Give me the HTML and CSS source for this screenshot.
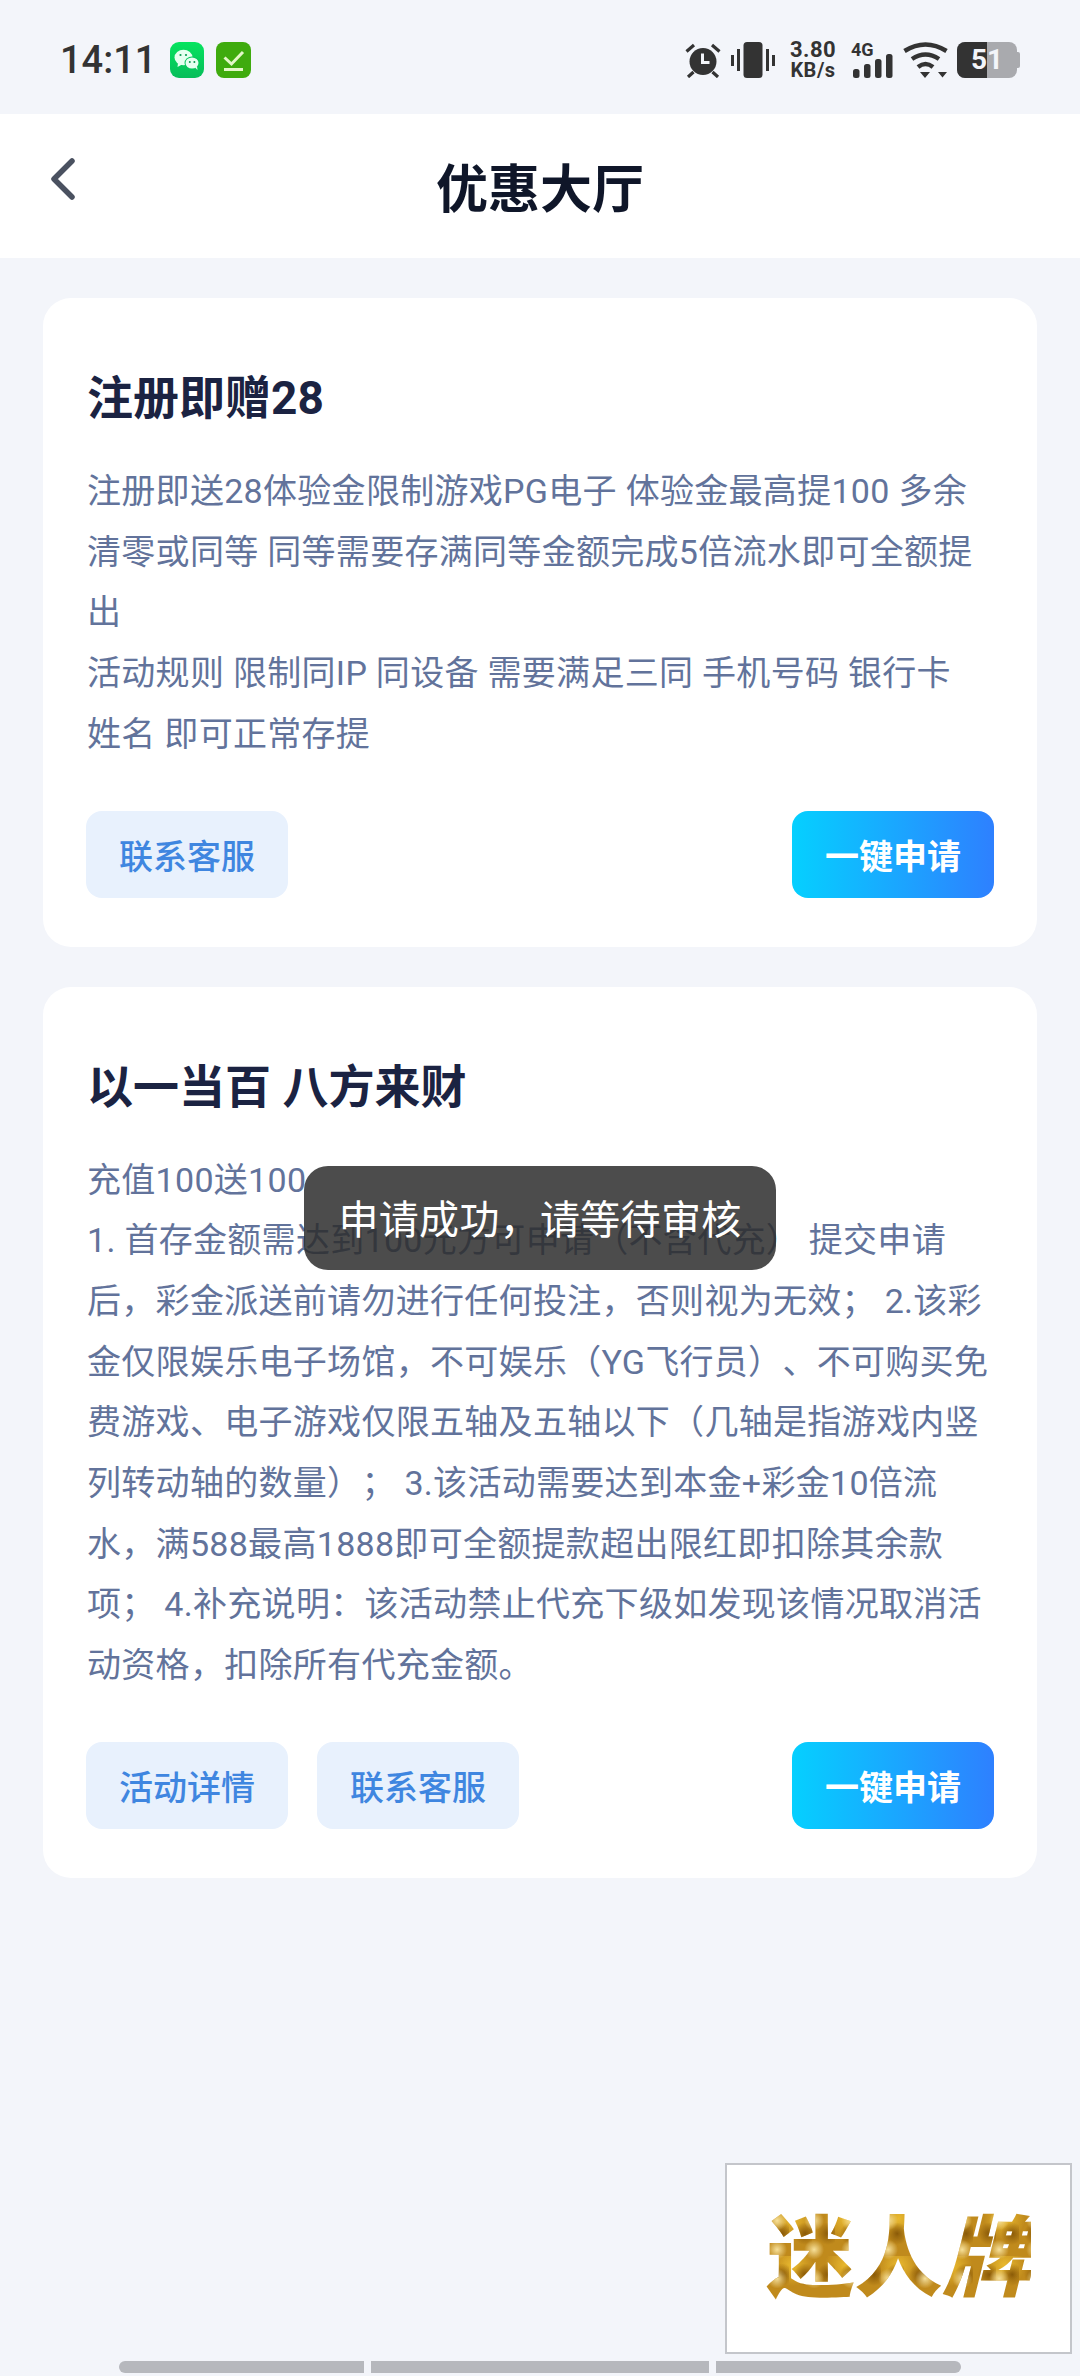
FILE: index.html
```html
<!DOCTYPE html>
<html lang="zh">
<head>
    <meta charset="utf-8">
    <title>优惠大厅</title>
    <link rel="stylesheet" href="styles.css">
</head>
<body>
    <div class="status-bar">
        <div class="status-left">
            <span class="time">14:11</span>
            <svg class="app-icon" viewBox="0 0 34 36">
                <defs>
                    <linearGradient id="wxGreen" x1="0" y1="0" x2="0" y2="1">
                        <stop offset="0" stop-color="#06e45f"/>
                        <stop offset="1" stop-color="#07bd5a"/>
                    </linearGradient>
                </defs>
                <rect width="34" height="36" rx="9" fill="url(#wxGreen)"/>
                <ellipse cx="13.5" cy="15.5" rx="9" ry="7.8" fill="#e6fff0"/>
                <path d="M8 21l-.5 4 4.500-2.500z" fill="#e6fff0"/>
                <ellipse cx="22" cy="21" rx="7.500" ry="6.500" fill="#06c85c"/>
                <ellipse cx="22" cy="21" rx="6.500" ry="5.600" fill="#e6fff0"/>
                <path d="M25 25.500l2.500 2.500-.5-4z" fill="#e6fff0"/>
                <circle cx="10.500" cy="13" r="1.100" fill="#0a9a50"/>
                <circle cx="16" cy="13" r="1.100" fill="#0a9a50"/>
                <circle cx="19.800" cy="20" r="1" fill="#0a9a50"/>
                <circle cx="24.400" cy="20" r="1" fill="#0a9a50"/>
            </svg>
            <svg class="app-icon app-icon-wide" viewBox="0 0 35 36">
                <rect width="35" height="36" rx="8" fill="#3fab0e"/>
                <path d="M8.500 15.500l7 6.500 11.500-12" fill="none" stroke="#e4f7c8" stroke-width="3"/>
                <path d="M8 27.500h19" fill="none" stroke="#e4f7c8" stroke-width="3"/>
            </svg>
        </div>
        <div class="status-right">
            <svg class="sys-icon" width="36" height="36" viewBox="0 0 36 36">
                <circle cx="18" cy="19.500" r="13.500" fill="#333"/>
                <path d="M17.500 11.500v9h7" fill="none" stroke="#f3f5fa" stroke-width="3"/>
                <path d="M1.500 9.500L9 3M34.500 9.500L27 3M3 35l5.500-5M33 35l-5.500-5" fill="none" stroke="#333" stroke-width="3.200"/>
            </svg>
            <svg class="sys-icon" width="44" height="36" viewBox="0 0 44 36">
                <rect x="12.500" y="0" width="19" height="36" rx="3.500" fill="#333"/>
                <path d="M1.500 13v11M7.500 7v22M36.500 7v22M42.500 13v11" fill="none" stroke="#333" stroke-width="3"/>
            </svg>
            <div class="net-speed"><span>3.80</span><span class="net-unit">KB/s</span></div>
            <div class="signal">
                <span class="signal-label">4G</span>
                <svg width="40" height="24" viewBox="0 0 40 24">
                    <rect x="0" y="15" width="6.500" height="9" rx="2.500" fill="#333"/>
                    <rect x="11" y="10" width="6.500" height="14" rx="2.500" fill="#333"/>
                    <rect x="22" y="5" width="6.500" height="19" rx="2.500" fill="#333"/>
                    <rect x="33" y="0" width="6.500" height="24" rx="2.500" fill="#333"/>
                </svg>
            </div>
            <svg class="sys-icon" width="45" height="36" viewBox="0 0 45 36">
                <path d="M1.500 9Q22.500 -4 43.500 9" fill="none" stroke="#333" stroke-width="4.500"/>
                <path d="M9 17Q22.500 8 36 17" fill="none" stroke="#333" stroke-width="4.500"/>
                <path d="M15 25Q22.500 19 30 25" fill="none" stroke="#333" stroke-width="4.500"/>
                <path d="M17 30h10l-5 6zM35 30h9l-4.500 5.500z" fill="#333"/>
            </svg>
            <div class="battery">
                <div class="battery-body"><div class="battery-fill"></div><span class="battery-num">51</span></div>
                <div class="battery-cap"></div>
            </div>
        </div>
    </div>

    <div class="top-bar">
        <svg class="back" width="24" height="42" viewBox="0 0 24 42">
            <path d="M21 3L3 21l18 18" fill="none" stroke="#4a5160" stroke-width="5.500" stroke-linecap="round" stroke-linejoin="round"/>
        </svg>
        <h1>优惠大厅</h1>
    </div>

    <div class="content">
        <div class="card">
            <h2>注册即赠28</h2>
            <p>注册即送28体验金限制游戏PG电子 体验金最高提100 多余清零或同等 同等需要存满同等金额完成5倍流水即可全额提出<br>活动规则 限制同IP 同设备 需要满足三同 手机号码 银行卡 姓名 即可正常存提</p>
            <div class="actions">
                <a class="btn btn-light">联系客服</a>
                <a class="btn btn-apply">一键申请</a>
            </div>
        </div>
        <div class="card">
            <h2>以一当百 八方来财</h2>
            <p>充值100送100<br>1. 首存金额需达到100元方可申请（不含代充） 提交申请后，彩金派送前请勿进行任何投注，否则视为无效； 2.该彩金仅限娱乐电子场馆，不可娱乐（YG飞行员）、不可购买免费游戏、电子游戏仅限五轴及五轴以下（几轴是指游戏内竖列转动轴的数量）； 3.该活动需要达到本金+彩金10倍流水，满588最高1888即可全额提款超出限红即扣除其余款项； 4.补充说明：该活动禁止代充下级如发现该情况取消活动资格，扣除所有代充金额。</p>
            <div class="actions">
                <a class="btn btn-light">活动详情</a>
                <a class="btn btn-light">联系客服</a>
                <a class="btn btn-apply">一键申请</a>
            </div>
        </div>
    </div>

    <!-- 提示 -->
    <div class="toast">申请成功，请等待审核</div>

    <!-- 悬浮广告 -->
    <div class="float-ad"><span class="ad-text">迷人<i>牌</i></span></div>

    <div class="gesture">
        <span class="gesture-a"></span>
        <span class="gesture-b"></span>
        <span class="gesture-c"></span>
    </div>
</body>
</html>
```

FILE: styles.css
```css
* {
    box-sizing: border-box;
}

html, body {
    margin: 0;
    height: 2376px;
    overflow: hidden;
}

body {
    position: relative;
    background-color: #f3f5fa;
    font-family: "Roboto", "Noto Sans CJK SC", sans-serif;
    color: #333;
}

.status-bar {
    height: 114px;
    padding: 42px 60px 0 60px;
    display: flex;
    justify-content: space-between;
    align-items: flex-start;
}

.status-left {
    display: flex;
    align-items: center;
    gap: 12px;
    height: 36px;
}

.time {
    font-size: 38px;
    font-weight: 500;
    line-height: 36px;
    width: 98px;
}

.app-icon {
    width: 34px;
    height: 36px;
}

.app-icon-wide {
    width: 35px;
}

.status-right {
    display: flex;
    align-items: flex-start;
    gap: 10px;
    height: 36px;
}

.sys-icon {
    display: block;
}

.net-speed {
    width: 46px;
    margin: -2px 5px 0;
    display: flex;
    flex-direction: column;
    align-items: center;
    font-size: 22px;
    font-weight: 700;
    line-height: 20px;
    letter-spacing: 0.5px;
}

.net-unit {
    font-size: 20px;
}

.signal {
    width: 42px;
    height: 36px;
    position: relative;
}

.signal-label {
    display: block;
    font-size: 18px;
    font-weight: 700;
    line-height: 16px;
}

.signal svg {
    position: absolute;
    left: 2px;
    bottom: 0;
}

.battery {
    display: flex;
    align-items: center;
    margin-left: -1px;
}

.battery-body {
    position: relative;
    width: 60px;
    height: 36px;
    border-radius: 8px;
    background-color: #a9aaae;
    overflow: hidden;
}

.battery-fill {
    width: 30px;
    height: 36px;
    background-color: #333;
}

.battery-num {
    position: absolute;
    left: 0;
    right: 0;
    top: 0;
    text-align: center;
    font-size: 28px;
    font-weight: 700;
    line-height: 36px;
    color: #f3f5fa;
}

.battery-cap {
    width: 3px;
    height: 16px;
    border-radius: 0 2px 2px 0;
    background-color: #a9aaae;
}

.top-bar {
    position: relative;
    height: 144px;
    background-color: #fff;
    display: flex;
    align-items: center;
    justify-content: center;
}

.back {
    position: absolute;
    left: 51px;
    top: 44px;
}

h1 {
    margin: 0;
    font-size: 52px;
    font-weight: 700;
    color: #0f1629;
    padding-bottom: 2px;
}

.content {
    padding: 40px 43px 0;
    display: flex;
    flex-direction: column;
    gap: 40px;
}

.card {
    background-color: #fff;
    border-radius: 28px;
    padding: 68px 43px 49px 44px;
}

h2 {
    margin: 0 0 31px;
    font-size: 46px;
    line-height: 64px;
    font-weight: 700;
    color: #1b2342;
}

.card p {
    margin: 0;
    font-size: 34px;
    letter-spacing: 0.3px;
    line-height: 60.7px;
    color: #62739b;
    width: 906px;
    text-spacing-trim: space-all;
}

.actions {
    margin: 46px 0 0 -1px;
    display: flex;
    gap: 29px;
}

.btn {
    width: 202px;
    height: 87px;
    border-radius: 16px;
    display: flex;
    align-items: center;
    justify-content: center;
    font-size: 34px;
    font-weight: 500;
}

.btn-light {
    background-color: #e8f1fd;
    color: #3f86e0;
}

.btn-apply {
    margin-left: auto;
    background: linear-gradient(90deg, #05d0ff, #2e80ff);
    color: #fff;
    font-weight: 700;
}

.toast {
    position: absolute;
    left: 304px;
    top: 1166px;
    width: 472px;
    height: 104px;
    padding-bottom: 3px;
    border-radius: 24px;
    background-color: rgba(45, 45, 45, 0.85);
    color: #fff;
    font-size: 40px;
    letter-spacing: 0.3px;
    display: flex;
    align-items: center;
    justify-content: center;
}

.float-ad {
    position: absolute;
    left: 725px;
    top: 2163px;
    width: 347px;
    height: 191px;
    background-color: #fff;
    border: 2px solid #c4c6cb;
    display: flex;
    align-items: center;
    justify-content: center;
}

.ad-text {
    font-size: 88px;
    font-weight: 900;
    line-height: 100px;
    background-color: #c08a1c;
    background-image:
        radial-gradient(circle at 30% 40%, #f6e09a 0, rgba(246, 224, 154, 0) 32%),
        radial-gradient(circle at 70% 60%, #8a5a08 0, rgba(138, 90, 8, 0) 38%),
        radial-gradient(circle at 50% 20%, #e9b92f 0, rgba(233, 185, 47, 0) 45%);
    background-size: 37px 29px, 23px 41px, 53px 47px;
    -webkit-background-clip: text;
    background-clip: text;
    color: transparent;
}

.ad-text i {
    font-style: italic;
}

.gesture {
    position: absolute;
    left: 119px;
    top: 2361px;
    width: 842px;
    height: 12px;
    display: flex;
    gap: 7px;
}

.gesture span {
    background-color: #b6b8bd;
}

.gesture-a {
    width: 245px;
    border-radius: 6px 0 0 6px;
}

.gesture-b {
    width: 338px;
}

.gesture-c {
    width: 245px;
    border-radius: 0 6px 6px 0;
}
```
